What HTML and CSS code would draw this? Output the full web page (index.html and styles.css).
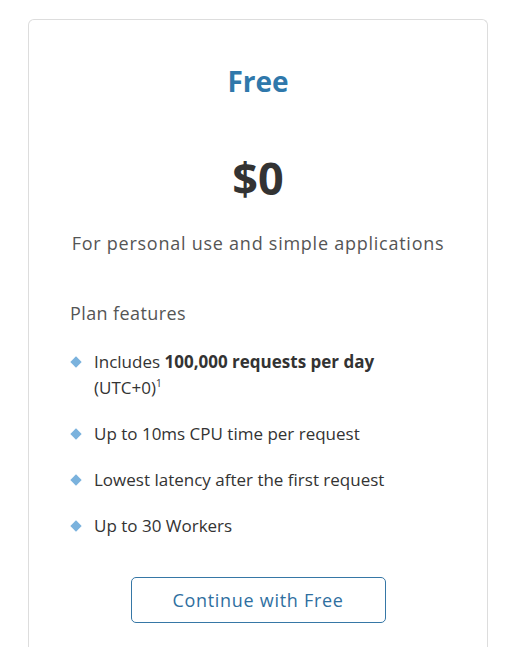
FILE: index.html
```html
<!DOCTYPE html>
<html lang="en">
<head>
  <meta charset="UTF-8" />
  <title>Free plan</title>
  <link rel="stylesheet" href="styles.css">
</head>
<body>
  <div class="plan-card">
    <h2 class="plan-name">Free</h2>
    <div class="plan-price">$0</div>
    <p class="plan-desc">For personal use and simple applications</p>

    <div class="features">
      <p class="features-title">Plan features</p>
      <ul class="feature-list">
        <li><span class="bullet"></span><span>Includes <b>100,000 requests per day</b> (UTC+0)<sup>1</sup></span></li>
        <li><span class="bullet"></span><span>Up to 10ms CPU time per request</span></li>
        <li><span class="bullet"></span><span>Lowest latency after the first request</span></li>
        <li><span class="bullet"></span><span>Up to 30 Workers</span></li>
      </ul>
    </div>

    <button class="plan-button">Continue with Free</button>
  </div>
</body>
</html>
```

FILE: styles.css
```css
* {
  box-sizing: border-box;
  margin: 0;
  padding: 0;
}

html, body {
  background: #fff;
  font-family: 'Open Sans', 'Noto Sans', sans-serif;
  color: #333;
}

body {
  padding: 19px 0 0 28px;
}

.plan-card {
  width: 460px;
  min-height: 660px;
  border: 1px solid #ddd;
  border-bottom: none;
  border-radius: 6px 6px 0 0;
  padding: 46px 41px 0;
  text-align: center;
}

.plan-name {
  font-size: 28px;
  font-weight: 700;
  color: #2f78ab;
  line-height: 30px;
}

.plan-price {
  margin-top: 57px;
  font-size: 45px;
  font-weight: 700;
  color: #333;
  line-height: 50px;
}

.plan-desc {
  margin-top: 27px;
  font-size: 18px;
  letter-spacing: 0.75px;
  color: #555;
  line-height: 26px;
}

.features {
  margin-top: 44px;
  text-align: left;
}

.features-title {
  font-size: 18px;
  letter-spacing: 0.4px;
  color: #555;
  line-height: 26px;
}

.feature-list {
  list-style: none;
  margin-top: 23px;
  display: flex;
  flex-direction: column;
  gap: 20px;
}

.feature-list li {
  display: flex;
  gap: 14px;
  font-size: 17px;
  line-height: 26px;
  color: #333;
}

.feature-list b {
  font-weight: 700;
}

.feature-list sup {
  font-size: 10px;
  line-height: 0;
}

.bullet {
  flex: none;
  width: 8px;
  height: 8px;
  margin: 9px 0 0 2px;
  background: #7ab2dd;
  transform: rotate(45deg);
}

.plan-button {
  display: block;
  margin: 38px auto 0;
  width: 255px;
  height: 46px;
  background: #fff;
  border: 1px solid #3677a6;
  border-radius: 5px;
  font-family: inherit;
  font-size: 18px;
  letter-spacing: 0.7px;
  color: #2f6f9f;
}
```
